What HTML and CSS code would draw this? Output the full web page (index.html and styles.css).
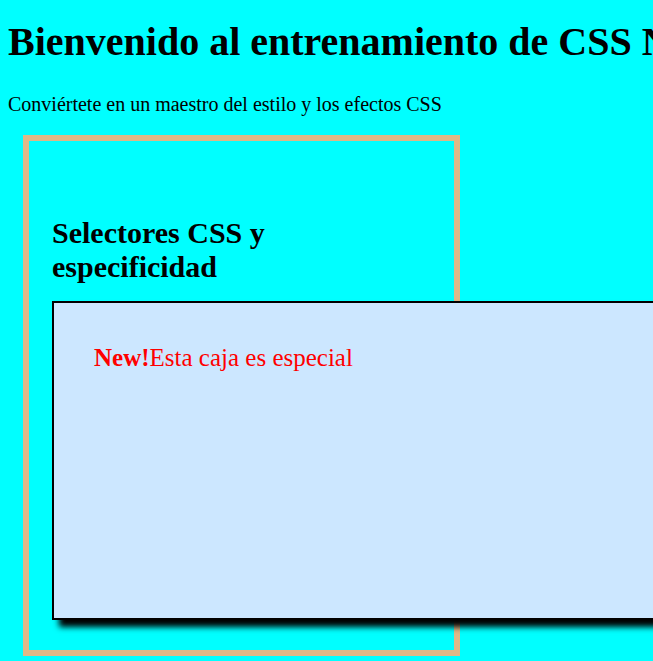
FILE: index.html
```html
<!DOCTYPE html>
<html lang="es">
<head>
<meta charset="utf-8">
<title>Entrenamiento CSS</title>
<link rel="stylesheet" href="styles.css">
</head>
<body>
<h1 class="title">Bienvenido al entrenamiento de CSS Nivel Avanzado</h1>
<p class="subtitle">Conviértete en un maestro del estilo y los efectos CSS</p>
<section class="card">
  <h2 class="card-title">Selectores CSS y especificidad</h2>
  <div class="special-box">
    <p class="special-text"><strong class="badge">New!</strong>Esta caja es especial</p>
  </div>
</section>
</body>
</html>
```
FILE: styles.css
```css
html {
  overflow: hidden;
}
body {
  margin: 0;
  padding: 8px;
  background: #00ffff;
  font-family: "Liberation Serif", "Times New Roman", serif;
  color: #000;
}
.title {
  font-size: 40px;
  font-weight: bold;
  margin: 11px 0 0;
  white-space: nowrap;
  line-height: 46px;
}
.subtitle {
  font-size: 20px;
  line-height: 23px;
  margin: 28px 0 19px;
}
.card {
  width: 437px;
  box-sizing: border-box;
  margin: 0 15px;
  border: 6px solid #deb887;
  padding: 51px 23px 30px;
}
.card-title {
  font-size: 30px;
  line-height: 34px;
  font-weight: bold;
  margin: 24px 0 17px;
}
.special-box {
  width: 620px;
  height: 235px;
  padding: 41px 40px 39px;
  background: #cce7ff;
  border: 2px solid #000;
  box-shadow: 7px 7px 6px #000;
}
.special-text {
  margin: 0;
  color: #ff0000;
  font-size: 25px;
}
.badge {
  font-weight: bold;
}
```
